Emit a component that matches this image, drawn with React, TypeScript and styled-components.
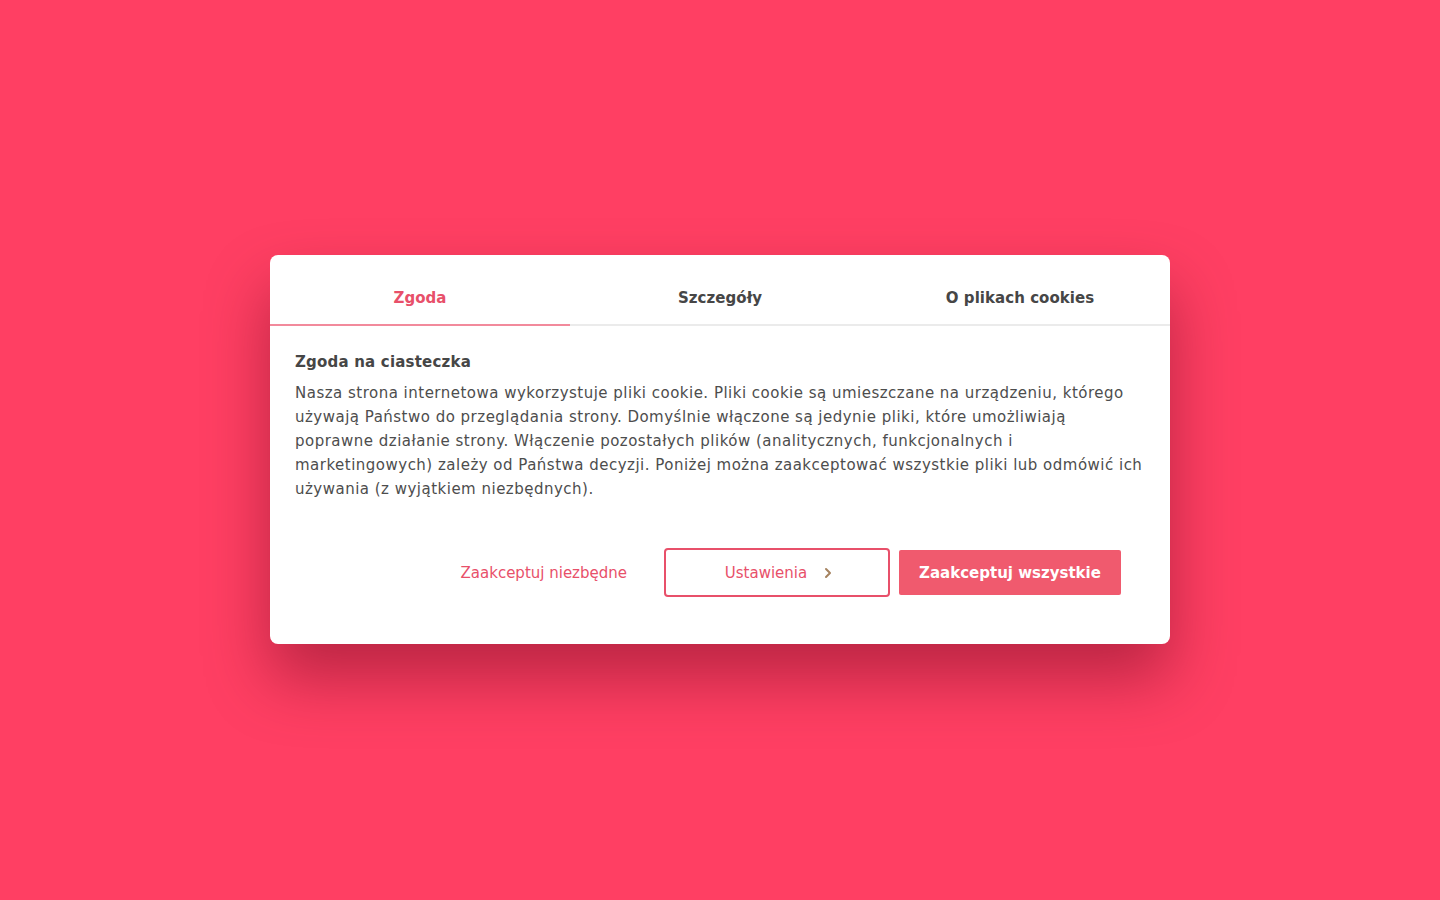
import React, { useState } from "react";
import styled, { createGlobalStyle } from "styled-components";

const GlobalStyle = createGlobalStyle`
  html, body {
    margin: 0;
    padding: 0;
    background: #ff3f63;
  }
  body {
    font-family: "DejaVu Sans", "Noto Sans", sans-serif;
  }
  * {
    box-sizing: border-box;
  }
`;

const Page = styled.div`
  width: 100%;
  height: 900px;
  display: flex;
  align-items: flex-start;
  justify-content: center;
  padding-top: 255px;
  background: #ff3f63;
`;

const Dialog = styled.div`
  width: 900px;
  background: #fff;
  border-radius: 8px;
  box-shadow: 0 34px 64px rgba(90, 0, 25, 0.42);
  overflow: hidden;
`;

const Tabs = styled.div`
  display: grid;
  grid-template-columns: repeat(3, 1fr);
  border-bottom: 2px solid #ebebeb;
`;

const Tab = styled.button<{ active?: boolean }>`
  height: 69px;
  border: 0;
  background: transparent;
  font-family: inherit;
  font-size: 15px;
  font-weight: 700;
  letter-spacing: 0.05px;
  color: ${(p) => (p.active ? "#e8506a" : "#464646")};
  cursor: pointer;
  position: relative;
  padding: 17px 0 0;

  &::after {
    content: "";
    position: absolute;
    left: 0;
    right: 0;
    bottom: -2px;
    height: 2px;
    background: ${(p) => (p.active ? "#f28a9c" : "transparent")};
  }
`;

const Body = styled.div`
  padding: 25px 49px 47px 25px;
`;

const Title = styled.h2`
  margin: 0 0 8px;
  font-size: 15px;
  font-weight: 700;
  letter-spacing: 0.2px;
  color: #464646;
  line-height: 22px;
`;

const Text = styled.p`
  margin: 0;
  width: 850px;
  font-size: 15px;
  line-height: 24px;
  color: #4d4d4d;
  letter-spacing: 0.49px;
`;

const Actions = styled.div`
  display: flex;
  justify-content: flex-end;
  align-items: center;
  gap: 9px;
  margin-top: 47px;
`;

const LinkButton = styled.button`
  border: 0;
  background: transparent;
  font-family: inherit;
  font-size: 15px;
  color: #e8506a;
  padding: 0 28px;
  height: 48px;
  cursor: pointer;
`;

const OutlineButton = styled.button`
  width: 226px;
  height: 49px;
  border: 2px solid #e8506a;
  border-radius: 4px;
  background: #fff;
  font-family: inherit;
  font-size: 15px;
  color: #e8506a;
  display: flex;
  align-items: center;
  justify-content: center;
  gap: 16px;
  cursor: pointer;
  padding-left: 10px;
`;

const FilledButton = styled.button`
  width: 222px;
  height: 45px;
  border: 0;
  border-radius: 2px;
  background: #f05a6e;
  font-family: inherit;
  font-size: 15px;
  font-weight: 700;
  color: #fff;
  cursor: pointer;
`;

const Chevron = () => (
  <svg width="10" height="12" viewBox="0 0 10 12" fill="none">
    <path
      d="M3 2l4 4-4 4"
      stroke="#a5825f"
      strokeWidth="2"
      strokeLinecap="round"
      strokeLinejoin="round"
    />
  </svg>
);

const tabs = ["Zgoda", "Szczegóły", "O plikach cookies"];

export default function App() {
  const [active, setActive] = useState(0);

  return (
    <>
      <GlobalStyle />
      <Page>
        <Dialog>
          <Tabs>
            {tabs.map((t, i) => (
              <Tab key={t} active={i === active} onClick={() => setActive(i)}>
                {t}
              </Tab>
            ))}
          </Tabs>
          <Body>
            <Title>Zgoda na ciasteczka</Title>
            <Text>
              Nasza strona internetowa wykorzystuje pliki cookie. Pliki cookie
              są umieszczane na urządzeniu, którego używają Państwo do
              przeglądania strony. Domyślnie włączone są jedynie pliki, które
              umożliwiają poprawne działanie strony. Włączenie pozostałych
              plików (analitycznych, funkcjonalnych i marketingowych) zależy od
              Państwa decyzji. Poniżej można zaakceptować wszystkie pliki lub
              odmówić ich używania (z wyjątkiem niezbędnych).
            </Text>
            <Actions>
              <LinkButton>Zaakceptuj niezbędne</LinkButton>
              <OutlineButton>
                Ustawienia <Chevron />
              </OutlineButton>
              <FilledButton>Zaakceptuj wszystkie</FilledButton>
            </Actions>
          </Body>
        </Dialog>
      </Page>
    </>
  );
}
